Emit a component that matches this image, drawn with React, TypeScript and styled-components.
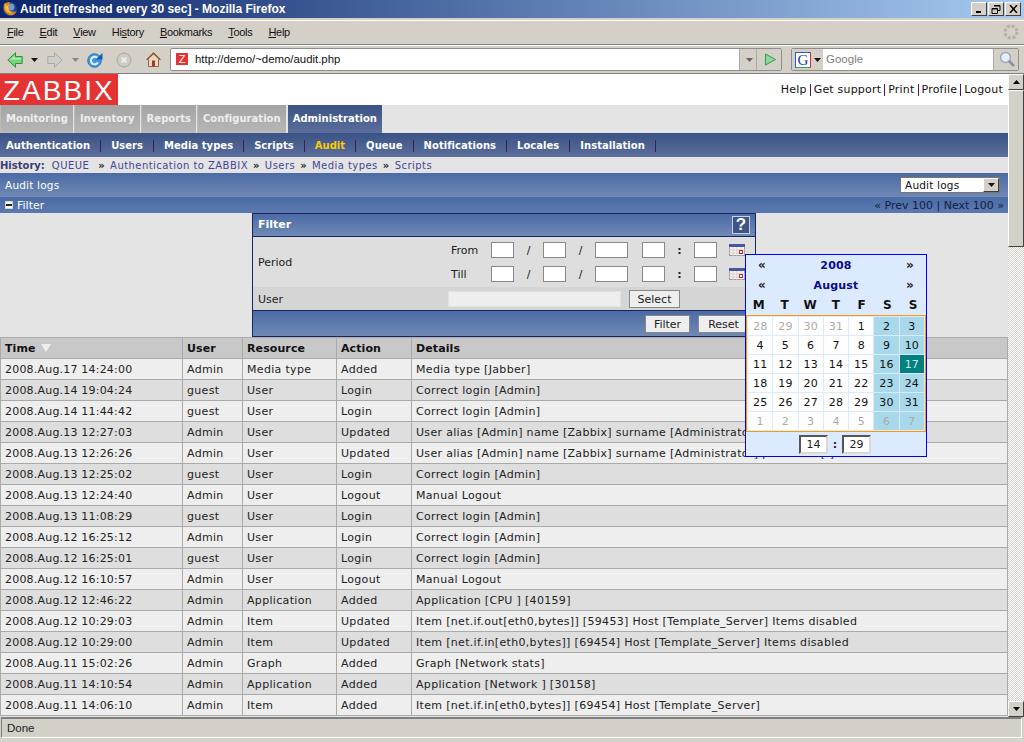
import React from 'react';
import styled, { createGlobalStyle } from 'styled-components';

const GlobalStyle = createGlobalStyle`
  html, body { margin: 0; padding: 0; background: #d4d0c8; overflow: hidden; }
  * { box-sizing: border-box; }
`;

const ui = '"Liberation Sans", Arial, sans-serif';
const verdana = '"DejaVu Sans", Verdana, sans-serif';

const Window = styled.div`
  width: 1024px;
  height: 742px;
  display: flex;
  flex-direction: column;
  overflow: hidden;
  background: #d4d0c8;
  font-family: ${verdana};
`;

/* browser chrome */
const TitleBar = styled.div`
  height: 18px;
  flex: none;
  display: flex;
  align-items: center;
  padding: 0 3px 0 2px;
  gap: 2px;
  background: linear-gradient(90deg, #0a246a 0%, #a6caf0 100%);
`;
const TitleText = styled.span`
  flex: 1;
  color: #fff;
  font: bold 12px ${ui};
  white-space: nowrap;
`;
const WinButtons = styled.div`
  display: flex;
  gap: 1px;
`;
const WinButton = styled.div`
  width: 16px;
  height: 14px;
  background: #d4d0c8;
  border: 1px solid;
  border-color: #fff #404040 #404040 #fff;
  display: flex;
  align-items: center;
  justify-content: center;
`;
const MenuBar = styled.div`
  height: 25px;
  flex: none;
  margin-top: 2px;
  display: flex;
  align-items: center;
  padding: 0 7px 2px;
  gap: 16px;
  border-top: 1px solid #fff;
  border-bottom: 1px solid #808080;
  font: 11px ${ui};
  letter-spacing: -0.3px;
  color: #111;
  position: relative;
`;
const Accel = styled.span`
  text-decoration: underline;
`;
const Throbber = styled.svg`
  position: absolute;
  right: 5px;
  top: 3px;
`;
const NavBar = styled.div`
  height: 29px;
  flex: none;
  display: flex;
  align-items: center;
  padding: 0 0 0 7px;
  border-top: 1px solid #fff;
  border-bottom: 1px solid #808080;
`;
const NavIcon = styled.div<{ $w: number }>`
  width: ${({ $w }) => $w}px;
  flex: none;
  display: flex;
  align-items: center;
  justify-content: flex-start;
`;
const UrlBox = styled.div`
  width: 612px;
  height: 23px;
  flex: none;
  display: flex;
  align-items: stretch;
  background: #fff;
  border: 1px solid #8e8e8e;
  border-radius: 2px;
`;
const Favicon = styled.span`
  width: 12px;
  height: 12px;
  margin: 4px 7px 0 5px;
  background: #e53333;
  color: #fff;
  font: 11px/12px ${ui};
  text-align: center;
  flex: none;
`;
const UrlText = styled.span`
  flex: 1;
  font: 11.4px/21px ${ui};
  color: #111;
`;
const UrlCell = styled.div<{ $w: number }>`
  width: ${({ $w }) => $w}px;
  padding-left: 3px;
  background: #d4d0c8;
  border-left: 1px solid #aaa;
  display: flex;
  align-items: center;
  justify-content: center;
  flex: none;
`;
const SearchBox = styled.div`
  width: 228px;
  height: 23px;
  margin-left: 9px;
  flex: none;
  display: flex;
  align-items: stretch;
  background: #fff;
  border: 1px solid #8e8e8e;
  border-radius: 2px;
`;
const EngineCell = styled.div`
  width: 31px;
  background: #d4d0c8;
  display: flex;
  align-items: center;
  gap: 3px;
  padding-left: 3px;
  flex: none;
`;
const EngineG = styled.span`
  width: 16px;
  height: 16px;
  background: #fff;
  border: 1px solid;
  border-color: #2a5bd7 #d92b2b #2fa84f #2a5bd7;
  color: #1838b8;
  font: 15px/14px "Liberation Serif", serif;
  text-align: center;
`;
const SearchText = styled.span`
  flex: 1;
  padding-left: 3px;
  font: 11.5px/21px ${ui};
  color: #808080;
`;

/* page */
const Viewport = styled.div`
  height: 643px;
  flex: none;
  display: flex;
`;
const Page = styled.div`
  width: 1008px;
  flex: none;
  background: #e4e4e4;
  overflow: hidden;
  position: relative;
  display: flex;
  flex-direction: column;
`;
const Header = styled.div`
  height: 31px;
  flex: none;
  background: #fff;
  display: flex;
  justify-content: space-between;
`;
const Logo = styled.div`
  width: 118px;
  height: 31px;
  background: #e53333;
  color: #fff;
  font: 28px/33px ${ui};
  letter-spacing: 2px;
  padding-left: 3px;
  white-space: nowrap;
`;
const TopLinks = styled.div`
  display: flex;
  align-items: center;
  height: 31px;
  padding: 1px 5px 0 0;
  font-size: 11px;
  letter-spacing: 0.2px;
  color: #111;
`;
const TopLink = styled.span`
  padding: 0 3px;
  border-left: 1px solid #4a1a5a;
  line-height: 12px;
  &:first-child { border-left: 0; }
  &:last-child { padding-right: 0; }
`;
const MainTabs = styled.div`
  height: 28px;
  flex: none;
  display: flex;
  background: #e4e4e4;
`;
const MainTab = styled.div<{ $active?: boolean }>`
  height: 28px;
  padding: 0 5px;
  margin-right: 1px;
  margin-left: ${({ $active }) => ($active ? '1px' : '0')};
  font: bold 10px/28px ${verdana};
  letter-spacing: 0.03px;
  color: ${({ $active }) => ($active ? '#fff' : '#eee')};
  border: ${({ $active }) => ($active ? '0' : '1px solid #bbb')};
  border-width: ${({ $active }) => ($active ? '0' : '0 0 1px 1px')};
  background: ${({ $active }) =>
    $active ? 'linear-gradient(#3a5285, #5c6f9c)' : 'linear-gradient(#a4a4a4, #b6b6b6)'};
  white-space: nowrap;
`;
const SubNav = styled.div`
  height: 24px;
  flex: none;
  display: flex;
  align-items: center;
  padding: 1px 0 0 6px;
  background: linear-gradient(#3a5285, #5c6f9c);
`;
const SubItem = styled.span<{ $active?: boolean }>`
  font: bold 10px ${verdana};
  letter-spacing: 0.03px;
  color: ${({ $active }) => ($active ? '#ffcc00' : '#fff')};
  padding-right: 10px;
  margin-right: 10px;
  border-right: 1px solid #3a2050;
  line-height: 12px;
`;
const History = styled.div`
  height: 16px;
  flex: none;
  display: flex;
  align-items: center;
  gap: 5px;
  font-size: 10px;
  letter-spacing: 0.45px;
  color: #44449a;
  white-space: nowrap;
`;
const HistoryLabel = styled.b`
  color: #3c3c78;
  margin-right: 2px;
  letter-spacing: 0;
`;
const HistorySep = styled.b`
  color: #222;
  font-size: 10px;
`;
const TitleRow = styled.div`
  height: 24px;
  flex: none;
  display: flex;
  align-items: center;
  justify-content: space-between;
  padding: 0 8px 0 5px;
  background: linear-gradient(#4b6ba5, #7089b5);
  color: #fff;
  font-size: 10.5px;
  letter-spacing: 0.2px;
`;
const SelectBox = styled.div`
  width: 100px;
  height: 16px;
  background: #fff;
  border: 1px solid #777;
  display: flex;
  justify-content: space-between;
  color: #111;
  font: 10.5px/14px ${verdana};
  letter-spacing: 0.2px;
  padding-left: 4px;
`;
const SelectArrow = styled.span`
  width: 16px;
  height: 14px;
  background: #d4d0c8;
  border: 1px solid;
  border-color: #fff #404040 #404040 #fff;
  display: flex;
  align-items: center;
  justify-content: center;
`;
const FilterBar = styled.div`
  height: 16px;
  flex: none;
  display: flex;
  align-items: center;
  justify-content: space-between;
  padding: 0 4px 0 5px;
  background: linear-gradient(#4b6ba5, #5b79b0);
  color: #fff;
  font-size: 11px;
`;
const FilterToggle = styled.span`
  display: flex;
  align-items: center;
  gap: 4px;
`;
const Minus = styled.span`
  width: 8px;
  height: 8px;
  background: #fff;
  border: 1px solid #d4d4d4;
  display: flex;
  align-items: center;
  justify-content: center;
  &::before { content: ''; width: 6px; height: 2px; background: #222; }
`;
const Pager = styled.span`
  color: #10203f;
  font-size: 11px;
`;
const FilterArea = styled.div`
  height: 124px;
  flex: none;
  display: flex;
  justify-content: center;
`;
const FilterPanel = styled.div`
  width: 504px;
  height: 124px;
  border: 1px solid #1b2560;
  display: flex;
  flex-direction: column;
  background: #dedede;
  font-size: 11px;
  color: #222;
`;
const PanelTitle = styled.div`
  height: 23px;
  flex: none;
  display: flex;
  align-items: center;
  justify-content: space-between;
  padding: 0 5px 0 5px;
  background: linear-gradient(#4b6ba5, #7089b5);
  border-bottom: 1px solid #1b2560;
  color: #fff;
  font: bold 11px/18px ${verdana};
`;
const HelpIcon = styled.span`
  width: 18px;
  height: 18px;
  background: #3d5585;
  border: 1px solid #c8d0e0;
  color: #fff;
  font: bold 17px/16px ${ui};
  text-align: center;
`;
const PeriodRow = styled.div`
  height: 50px;
  flex: none;
  display: flex;
  align-items: center;
  padding-left: 5px;
`;
const RowLabel = styled.span`
  width: 193px;
  flex: none;
`;
const PeriodLines = styled.div`
  display: flex;
  flex-direction: column;
  gap: 8px;
`;
const DateLine = styled.div`
  display: flex;
  align-items: center;
  height: 16px;
`;
const DateLabel = styled.span`
  width: 40px;
  flex: none;
`;
const DateInput = styled.span<{ $w: number }>`
  width: ${({ $w }) => $w}px;
  height: 16px;
  flex: none;
  background: #fff;
  border: 1px solid #888;
`;
const DateSep = styled.span<{ $w: number; $bold?: boolean }>`
  width: ${({ $w }) => $w}px;
  flex: none;
  text-align: center;
  font-weight: ${({ $bold }) => ($bold ? 'bold' : 'normal')};
`;
const CalIcon = styled.svg`
  margin-left: 12px;
  flex: none;
`;
const UserRow = styled.div`
  height: 23px;
  flex: none;
  display: flex;
  align-items: center;
  padding-left: 5px;
  background: #d5d5d5;
`;
const UserLabel = styled.span`
  width: 190px;
  flex: none;
  padding-top: 2px;
`;
const UserInput = styled.span`
  width: 173px;
  height: 16px;
  flex: none;
  background: #eee;
  border: 1px solid #e2e2e2;
`;
const PanelButton = styled.span<{ $w: number; $gap?: number }>`
  width: ${({ $w }) => $w}px;
  height: 18px;
  flex: none;
  margin-left: ${({ $gap }) => $gap ?? 0}px;
  background: #eee;
  border: 1px solid #888;
  color: #222;
  font: 11px/18px ${verdana};
  text-align: center;
`;
const PanelFooter = styled.div`
  flex: 1;
  display: flex;
  align-items: center;
  justify-content: flex-end;
  padding-right: 6px;
  border-top: 1px solid #1b2560;
  background: linear-gradient(#4b6ba5, #7089b5);
`;
const Table = styled.table`
  width: 1008px;
  table-layout: fixed;
  border-collapse: collapse;
  font-size: 11px;
  color: #222;
`;
const Th = styled.th`
  height: 21px;
  padding: 0 4px;
  text-align: left;
  background: #c8c8c8;
  border: 1px solid #aaa;
  border-width: 1px 1px 1px 0;
  color: #111;
  font: bold 11px ${verdana};
  letter-spacing: 0.1px;
  white-space: nowrap;
  &:first-child { border-left-width: 1px; }
`;
const Tr = styled.tr<{ $odd: boolean }>`
  background: ${({ $odd }) => ($odd ? '#dedede' : '#eeeeee')};
`;
const Td = styled.td`
  height: 21px;
  padding: 0 4px;
  border: 1px solid #aaa;
  border-width: 0 1px 1px 0;
  letter-spacing: 0.32px;
  white-space: nowrap;
  overflow: hidden;
  &:first-child { border-left-width: 1px; letter-spacing: 0.2px; }
`;
const SortArrow = styled.span`
  display: inline-block;
  margin-left: 5px;
  width: 0;
  height: 0;
  border-left: 5px solid transparent;
  border-right: 5px solid transparent;
  border-top: 8px solid #eee;
`;

/* calendar popup */
const Calendar = styled.div`
  position: absolute;
  left: 745px;
  top: 180px;
  width: 182px;
  height: 203px;
  background: #dbeaff;
  border: 1px solid #0000ff;
  display: flex;
  flex-direction: column;
`;
const CalHead = styled.div`
  height: 20px;
  flex: none;
  display: flex;
  align-items: center;
  justify-content: space-between;
  padding: 0 12px 0 12px;
  font: bold 11px ${verdana};
  color: #0a0a8a;
  letter-spacing: 0.2px;
`;
const CalArrow = styled.span`
  color: #222;
  font: bold 12px ${verdana};
`;
const CalWeek = styled.div`
  height: 20px;
  flex: none;
  display: grid;
  grid-template-columns: repeat(7, 25.7px);
  align-items: center;
  font: bold 12px ${verdana};
  color: #111;
  text-align: center;
`;
const CalGrid = styled.div`
  height: 117px;
  width: 180px;
  flex: none;
  border: 1px solid #ff9900;
  display: grid;
  grid-template-columns: repeat(7, 1fr);
  grid-auto-rows: 1fr;
  gap: 1px;
  padding: 1px;
  background: #dbeaff;
`;
const CalDay = styled.span<{ $kind: string; $weekend: boolean }>`
  display: flex;
  align-items: center;
  justify-content: center;
  font: 11px ${verdana};
  letter-spacing: 0.2px;
  color: ${({ $kind }) => ($kind === 'other' ? '#aaa' : $kind === 'today' ? '#cdebe8' : '#111')};
  background: ${({ $kind, $weekend }) => ($kind === 'today' ? '#008080' : $weekend ? '#a8d9ea' : '#fff')};
`;
const CalTime = styled.div`
  flex: 1;
  display: flex;
  align-items: center;
  justify-content: center;
  padding-right: 2px;
  color: #222;
  font: bold 11px ${verdana};
`;
const TimeInput = styled.span`
  width: 29px;
  height: 19px;
  background: #fff;
  border: 2px solid;
  border-color: #555 #d8d8d8 #d8d8d8 #555;
  font: 11px/15px ${verdana};
  text-align: center;
  color: #222;
`;
const TimeColon = styled.span`
  width: 14px;
  text-align: center;
`;

/* scrollbar */
const ScrollBar = styled.div`
  width: 16px;
  flex: none;
  display: flex;
  flex-direction: column;
  background-color: #eeece8;
  background-image: repeating-conic-gradient(#d4d0c8 0 25%, #fff 0 50%);
  background-size: 2px 2px;
`;
const ScrollButton = styled.div`
  width: 16px;
  height: 16px;
  flex: none;
  background: #d4d0c8;
  border: 1px solid;
  border-color: #fff #404040 #404040 #fff;
  display: flex;
  align-items: center;
  justify-content: center;
`;
const ScrollThumb = styled.div`
  height: 157px;
  flex: none;
  background: #d4d0c8;
  border: 1px solid;
  border-color: #fff #404040 #404040 #fff;
`;
const ScrollRest = styled.div`
  flex: 1;
`;
const StatusBar = styled.div`
  height: 22px;
  flex: none;
  padding: 0 2px 1px 1px;
  background: #d4d0c8;
`;
const StatusInner = styled.div`
  height: 100%;
  border: 1px solid;
  border-color: #808080 #fff #fff #808080;
  border-top-width: 2px;
  padding-left: 5px;
  font: 11.5px/18px ${ui};
  color: #222;
`;
const BottomEdge = styled.div`
  flex: 1;
  background: #d6d3c8;
`;

const FirefoxIcon = () => (
  <svg width="16" height="16" viewBox="0 0 16 16">
    <circle cx="8" cy="8" r="7" fill="#1f3f8f" />
    <circle cx="9" cy="6" r="3.5" fill="#6f9ad8" />
    <path d="M2 3c-1 4 0 9 5 11 4 1 7-1 8-5-1 2-4 3-6 2-2-1-3-3-2-5 1-2 0-4 1-5C5 1 3 2 2 3z" fill="#e8861a" />
    <path d="M3 3c0 3 0 6 3 8 2 1 5 1 7-1-2 1-5 1-6-1-1-2-1-3 0-5L5 5z" fill="#f6c23a" />
  </svg>
);

const BackIcon = () => (
  <svg width="16" height="16" viewBox="0 0 16 16">
    <path d="M.8 8L8.500.8V4.500h6.700v7H8.500v3.700z" fill="#74d67a" stroke="#2f8f3a" strokeWidth="1" strokeLinejoin="round" />
    <path d="M3 8l4.500-4.200V6h6.500v1.500H6z" fill="#b5edb0" />
  </svg>
);
const ForwardIcon = () => (
  <svg width="16" height="16" viewBox="0 0 16 16">
    <path d="M15.200 8L7.500.8V4.500H.8v7h6.700v3.700z" fill="#d0cec8" stroke="#aaa8a2" strokeWidth="1" strokeLinejoin="round" />
  </svg>
);
const Caret = ({ color = '#111' }: { color?: string }) => (
  <svg width="7" height="4" viewBox="0 0 7 4">
    <path d="M0 0h7L3.500 4z" fill={color} />
  </svg>
);
const ReloadIcon = () => (
  <svg width="16" height="16" viewBox="0 0 16 16">
    <circle cx="7.500" cy="8.500" r="6.800" fill="#3f9ae6" stroke="#2a74b8" />
    <path d="M11 6.500A3.800 3.800 0 1 0 11 10.500" fill="none" stroke="#e8f4fc" strokeWidth="2" />
    <path d="M8.500 7.500h7V1z" fill="#1a5da8" />
  </svg>
);
const StopIcon = () => (
  <svg width="16" height="16" viewBox="0 0 16 16">
    <circle cx="8" cy="8" r="7" fill="#cccac4" stroke="#aaa8a2" />
    <path d="M5.500 5.500l5 5m0-5l-5 5" stroke="#eeece8" strokeWidth="2" />
  </svg>
);
const HomeIcon = () => (
  <svg width="17" height="17" viewBox="0 0 17 17">
    <path d="M8.500 1.500L1.500 8.500h2v7h10v-7h2z" fill="#ead9c2" stroke="#8a6a50" strokeLinejoin="round" />
    <path d="M2.500 8l6-5.500 6 5.500" fill="none" stroke="#9a5a38" strokeWidth="1.500" />
    <rect x="7" y="9.500" width="3" height="6" fill="#a33a20" />
  </svg>
);
const GoIcon = () => (
  <svg width="13" height="13" viewBox="0 0 13 13">
    <path d="M1.500 1l10 5.500-10 5.500z" fill="#8fd89a" stroke="#2f9a4a" strokeLinejoin="round" />
  </svg>
);
const MagnifierIcon = () => (
  <svg width="17" height="17" viewBox="0 0 17 17">
    <circle cx="6.500" cy="6.500" r="5" fill="#e6eef8" stroke="#9aa8b8" strokeWidth="1.500" />
    <path d="M10 10l5 5" stroke="#8a8f98" strokeWidth="2.500" />
  </svg>
);
const CalendarIcon = () => (
  <CalIcon width="16" height="12" viewBox="0 0 16 12">
    <rect x=".5" y=".5" width="15" height="11" fill="#f4f4f4" stroke="#999" />
    <rect x="0" y="0" width="16" height="3" fill="#4a55a0" />
    <path d="M4 3v9M8 3v9M12 3v9M0 6h16M0 9h16" stroke="#dccccc" />
    <rect x="10.500" y="6.500" width="3" height="3" fill="#fff" stroke="#a33" />
  </CalIcon>
);

// [before the access key, access key, after it]
const menus = [
  ['', 'F', 'ile'],
  ['', 'E', 'dit'],
  ['', 'V', 'iew'],
  ['Hi', 's', 'tory'],
  ['', 'B', 'ookmarks'],
  ['', 'T', 'ools'],
  ['', 'H', 'elp'],
];
const mainTabs = ['Monitoring', 'Inventory', 'Reports', 'Configuration'];
const subItems = ['Authentication', 'Users', 'Media types', 'Scripts', 'Audit', 'Queue', 'Notifications', 'Locales', 'Installation'];
const topLinks = ['Help', 'Get support', 'Print', 'Profile', 'Logout'];

const logs = [
  ['2008.Aug.17 14:24:00', 'Admin', 'Media type', 'Added', 'Media type [Jabber]'],
  ['2008.Aug.14 19:04:24', 'guest', 'User', 'Login', 'Correct login [Admin]'],
  ['2008.Aug.14 11:44:42', 'guest', 'User', 'Login', 'Correct login [Admin]'],
  ['2008.Aug.13 12:27:03', 'Admin', 'User', 'Updated', 'User alias [Admin] name [Zabbix] surname [Administrator] password [-]'],
  ['2008.Aug.13 12:26:26', 'Admin', 'User', 'Updated', 'User alias [Admin] name [Zabbix] surname [Administrator] password [-]'],
  ['2008.Aug.13 12:25:02', 'guest', 'User', 'Login', 'Correct login [Admin]'],
  ['2008.Aug.13 12:24:40', 'Admin', 'User', 'Logout', 'Manual Logout'],
  ['2008.Aug.13 11:08:29', 'guest', 'User', 'Login', 'Correct login [Admin]'],
  ['2008.Aug.12 16:25:12', 'Admin', 'User', 'Login', 'Correct login [Admin]'],
  ['2008.Aug.12 16:25:01', 'guest', 'User', 'Login', 'Correct login [Admin]'],
  ['2008.Aug.12 16:10:57', 'Admin', 'User', 'Logout', 'Manual Logout'],
  ['2008.Aug.12 12:46:22', 'Admin', 'Application', 'Added', 'Application [CPU ] [40159]'],
  ['2008.Aug.12 10:29:03', 'Admin', 'Item', 'Updated', 'Item [net.if.out[eth0,bytes]] [59453] Host [Template_Server] Items disabled'],
  ['2008.Aug.12 10:29:00', 'Admin', 'Item', 'Updated', 'Item [net.if.in[eth0,bytes]] [69454] Host [Template_Server] Items disabled'],
  ['2008.Aug.11 15:02:26', 'Admin', 'Graph', 'Added', 'Graph [Network stats]'],
  ['2008.Aug.11 14:10:54', 'Admin', 'Application', 'Added', 'Application [Network ] [30158]'],
  ['2008.Aug.11 14:06:10', 'Admin', 'Item', 'Added', 'Item [net.if.in[eth0,bytes]] [69454] Host [Template_Server]'],
];

const calendarDays = [28, 29, 30, 31, ...Array.from({ length: 31 }, (_, i) => i + 1), 1, 2, 3, 4, 5, 6, 7];

const DateFields = () => (
  <>
    <DateInput $w={23} />
    <DateSep $w={29}>/</DateSep>
    <DateInput $w={23} />
    <DateSep $w={29}>/</DateSep>
    <DateInput $w={33} />
    <DateSep $w={14} />
    <DateInput $w={23} />
    <DateSep $w={29} $bold>:</DateSep>
    <DateInput $w={23} />
    <CalendarIcon />
  </>
);

export default function App() {
  return (
    <Window>
      <GlobalStyle />
      <TitleBar>
        <FirefoxIcon />
        <TitleText>Audit [refreshed every 30 sec] - Mozilla Firefox</TitleText>
        <WinButtons>
          <WinButton>
            <svg width="8" height="8" viewBox="0 0 8 8"><path d="M1 6h5v2H1z" fill="#000" /></svg>
          </WinButton>
          <WinButton>
            <svg width="10" height="9" viewBox="0 0 10 9"><path d="M3 .5h6v5H7M1 3.500h5.500v5H1zM3 1h6M1 4h5.500" fill="none" stroke="#000" /></svg>
          </WinButton>
          <WinButton>
            <svg width="9" height="8" viewBox="0 0 9 8"><path d="M1 0l7 8M8 0L1 8" stroke="#000" strokeWidth="1.500" /></svg>
          </WinButton>
        </WinButtons>
      </TitleBar>
      <MenuBar>
        {menus.map(([before, key, after]) => (
          <span key={key + after}>{before}<Accel>{key}</Accel>{after}</span>
        ))}
        <Throbber width="16" height="16" viewBox="0 0 16 16">
          <circle cx="8" cy="8" r="6" fill="none" stroke="#b4b0a8" strokeWidth="3" strokeDasharray="3 1.700" />
        </Throbber>
      </MenuBar>
      <NavBar>
        <NavIcon $w={24}><BackIcon /></NavIcon>
        <NavIcon $w={16}><Caret /></NavIcon>
        <NavIcon $w={25}><ForwardIcon /></NavIcon>
        <NavIcon $w={15}><Caret color="#888" /></NavIcon>
        <NavIcon $w={29}><ReloadIcon /></NavIcon>
        <NavIcon $w={29}><StopIcon /></NavIcon>
        <NavIcon $w={25}><HomeIcon /></NavIcon>
        <UrlBox>
          <Favicon>Z</Favicon>
          <UrlText>http://demo/~demo/audit.php</UrlText>
          <UrlCell $w={17}><Caret color="#666" /></UrlCell>
          <UrlCell $w={25}><GoIcon /></UrlCell>
        </UrlBox>
        <SearchBox>
          <EngineCell>
            <EngineG>G</EngineG>
            <Caret />
          </EngineCell>
          <SearchText>Google</SearchText>
          <UrlCell $w={25}><MagnifierIcon /></UrlCell>
        </SearchBox>
      </NavBar>
      <Viewport>
        <Page>
          <Header>
            <Logo>ZABBIX</Logo>
            <TopLinks>
              {topLinks.map((l) => <TopLink key={l}>{l}</TopLink>)}
            </TopLinks>
          </Header>
          <MainTabs>
            {mainTabs.map((t) => <MainTab key={t}>{t}</MainTab>)}
            <MainTab $active>Administration</MainTab>
          </MainTabs>
          <SubNav>
            {subItems.map((s) => <SubItem key={s} $active={s === 'Audit'}>{s}</SubItem>)}
          </SubNav>
          <History>
            <HistoryLabel>History:</HistoryLabel>
            <span>QUEUE</span>
            <HistorySep>&nbsp;»</HistorySep>
            <span>Authentication to ZABBIX</span>
            <HistorySep>»</HistorySep>
            <span>Users</span>
            <HistorySep>»</HistorySep>
            <span>Media types</span>
            <HistorySep>»</HistorySep>
            <span>Scripts</span>
          </History>
          <TitleRow>
            <span>Audit logs</span>
            <SelectBox>
              Audit logs
              <SelectArrow><Caret /></SelectArrow>
            </SelectBox>
          </TitleRow>
          <FilterBar>
            <FilterToggle><Minus />Filter</FilterToggle>
            <Pager>« Prev 100 | Next 100 »</Pager>
          </FilterBar>
          <FilterArea>
            <FilterPanel>
              <PanelTitle>
                Filter
                <HelpIcon>?</HelpIcon>
              </PanelTitle>
              <PeriodRow>
                <RowLabel>Period</RowLabel>
                <PeriodLines>
                  <DateLine><DateLabel>From</DateLabel><DateFields /></DateLine>
                  <DateLine><DateLabel>Till</DateLabel><DateFields /></DateLine>
                </PeriodLines>
              </PeriodRow>
              <UserRow>
                <UserLabel>User</UserLabel>
                <UserInput />
                <PanelButton $w={51} $gap={8}>Select</PanelButton>
              </UserRow>
              <PanelFooter>
                <PanelButton $w={45}>Filter</PanelButton>
                <PanelButton $w={51} $gap={8}>Reset</PanelButton>
              </PanelFooter>
            </FilterPanel>
          </FilterArea>
          <Table>
            <colgroup>
              <col width="182" />
              <col width="60" />
              <col width="94" />
              <col width="75" />
              <col />
            </colgroup>
            <thead>
              <tr>
                <Th>Time<SortArrow /></Th>
                <Th>User</Th>
                <Th>Resource</Th>
                <Th>Action</Th>
                <Th>Details</Th>
              </tr>
            </thead>
            <tbody>
              {logs.map((row, i) => (
                <Tr key={row[0] + i} $odd={i % 2 === 1}>
                  {row.map((c, j) => <Td key={j}>{c}</Td>)}
                </Tr>
              ))}
            </tbody>
          </Table>
          <Calendar>
            <CalHead><CalArrow>«</CalArrow>2008<CalArrow>»</CalArrow></CalHead>
            <CalHead><CalArrow>«</CalArrow>August<CalArrow>»</CalArrow></CalHead>
            <CalWeek>
              {['M', 'T', 'W', 'T', 'F', 'S', 'S'].map((d, i) => <span key={i}>{d}</span>)}
            </CalWeek>
            <CalGrid>
              {calendarDays.map((d, i) => {
                const other = i < 4 || i >= 35;
                return (
                  <CalDay
                    key={i}
                    $weekend={i % 7 >= 5}
                    $kind={other ? 'other' : d === 17 ? 'today' : 'day'}
                  >
                    {d}
                  </CalDay>
                );
              })}
            </CalGrid>
            <CalTime>
              <TimeInput>14</TimeInput>
              <TimeColon>:</TimeColon>
              <TimeInput>29</TimeInput>
            </CalTime>
          </Calendar>
        </Page>
        <ScrollBar>
          <ScrollButton>
            <svg width="7" height="4" viewBox="0 0 7 4"><path d="M0 4h7L3.500 0z" fill="#000" /></svg>
          </ScrollButton>
          <ScrollThumb />
          <ScrollRest />
          <ScrollButton><Caret color="#000" /></ScrollButton>
        </ScrollBar>
      </Viewport>
      <StatusBar>
        <StatusInner>Done</StatusInner>
      </StatusBar>
      <BottomEdge />
    </Window>
  );
}
